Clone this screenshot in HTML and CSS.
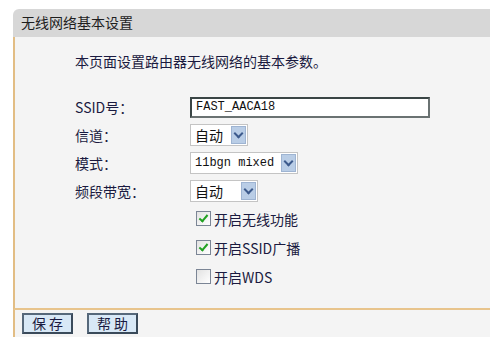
FILE: index.html
```html
<!DOCTYPE html>
<html lang="zh-CN">
<head>
    <meta charset="UTF-8">
    <title>无线网络基本设置</title>
    <link rel="stylesheet" href="styles.css">
</head>
<body>
    <div class="panel">
        <div class="panel-title">无线网络基本设置</div>
        <div class="panel-body">
            <p class="intro">本页面设置路由器无线网络的基本参数。</p>

            <div class="form-row row-ssid">
                <label>SSID号：</label>
                <input type="text" class="ssid" value="FAST_AACA18">
            </div>
            <div class="form-row row-channel">
                <label>信道：</label>
                <div class="select sel-channel"><span>自动</span><i class="arrow"></i></div>
            </div>
            <div class="form-row row-mode">
                <label>模式：</label>
                <div class="select sel-mode"><span class="mono">11bgn mixed</span><i class="arrow"></i></div>
            </div>
            <div class="form-row row-width">
                <label>频段带宽：</label>
                <div class="select sel-width"><span>自动</span><i class="arrow"></i></div>
            </div>

            <div class="checks">
                <div class="check"><span class="box on"></span>开启无线功能</div>
                <div class="check"><span class="box on"></span>开启SSID广播</div>
                <div class="check"><span class="box"></span>开启WDS</div>
            </div>
        </div>
        <div class="panel-foot">
            <button type="button">保 存</button>
            <button type="button">帮 助</button>
        </div>
    </div>
</body>
</html>
```

FILE: styles.css
```css
body {
    margin: 0;
    background-color: #ffffff;
    font-family: "Noto Sans CJK SC", "Noto Sans", sans-serif;
    color: #1a1a40;
}

.panel {
    margin: 9px 0 0 13px;
}

.panel-title {
    height: 28px;
    line-height: 27px;
    padding-left: 8px;
    background-color: #d7d7d7;
    border-top-left-radius: 6px;
    color: #1e1e1e;
    font-size: 14px;
}

.panel-body {
    background-color: #f4f4f4;
    border-left: 2px solid #e2bd84;
    border-bottom: 2px solid #e8c48c;
    padding: 14px 0 0 60px;
    height: 273px;
    box-sizing: border-box;
}

.intro {
    margin: 0 0 22px;
    font-size: 14px;
    line-height: 20px;
}

.form-row {
    display: flex;
    align-items: center;
    height: 28px;
}

.form-row label {
    width: 115px;
    font-size: 14px;
}

.ssid {
    width: 240px;
    height: 21px;
    box-sizing: border-box;
    border: 2px solid #3a4545;
    border-right-color: #6a7272;
    border-bottom-color: #6a7272;
    background: #ffffff;
    padding: 0 4px;
    font-family: "Liberation Mono", monospace;
    font-size: 12px;
    color: #111;
}

.select {
    display: flex;
    align-items: center;
    height: 22px;
    box-sizing: border-box;
    border: 1px solid #c4c4c4;
    background: #ffffff;
    font-size: 14px;
    color: #111;
    padding-left: 4px;
}

.select span {
    flex: 1;
}

.select .mono {
    font-family: "Liberation Mono", monospace;
    font-size: 12px;
}

.sel-channel { width: 58px; }
.sel-mode { width: 108px; }
.sel-width { width: 68px; }

.arrow {
    width: 15px;
    height: 18px;
    margin-right: 1px;
    background-color: #b9cde6;
    border: 1px solid #9eb4d2;
    box-sizing: border-box;
    position: relative;
}

.arrow::after {
    content: "";
    position: absolute;
    left: 3px;
    top: 3px;
    width: 5px;
    height: 5px;
    border-right: 2px solid #3c5a8c;
    border-bottom: 2px solid #3c5a8c;
    transform: rotate(45deg);
}

.checks {
    margin: -1px 0 0 121px;
}

.check {
    display: flex;
    align-items: center;
    height: 29px;
    font-size: 14px;
}

.box {
    width: 13px;
    height: 13px;
    border: 1px solid #7b8595;
    background: linear-gradient(135deg, #e2e2e2, #ffffff);
    margin-right: 3px;
    position: relative;
}

.box.on::after {
    content: "";
    position: absolute;
    left: 4px;
    top: 1px;
    width: 3px;
    height: 7px;
    border-right: 2px solid #21a121;
    border-bottom: 2px solid #21a121;
    transform: rotate(40deg);
}

.panel-foot {
    display: flex;
    gap: 14px;
    padding: 3px 0 0 7px;
    background-color: #f4f4f4;
    border-left: 2px solid #e2bd84;
    height: 30px;
}

.panel-foot button {
    width: 51px;
    height: 21px;
    padding: 0;
    background-color: #d8e8f6;
    border: 2px solid #3a4a5a;
    border-top-color: #56687a;
    border-left-color: #56687a;
    font-family: "Noto Sans CJK SC", sans-serif;
    font-size: 14px;
    color: #1a1a40;
    line-height: 15px;
}
```
